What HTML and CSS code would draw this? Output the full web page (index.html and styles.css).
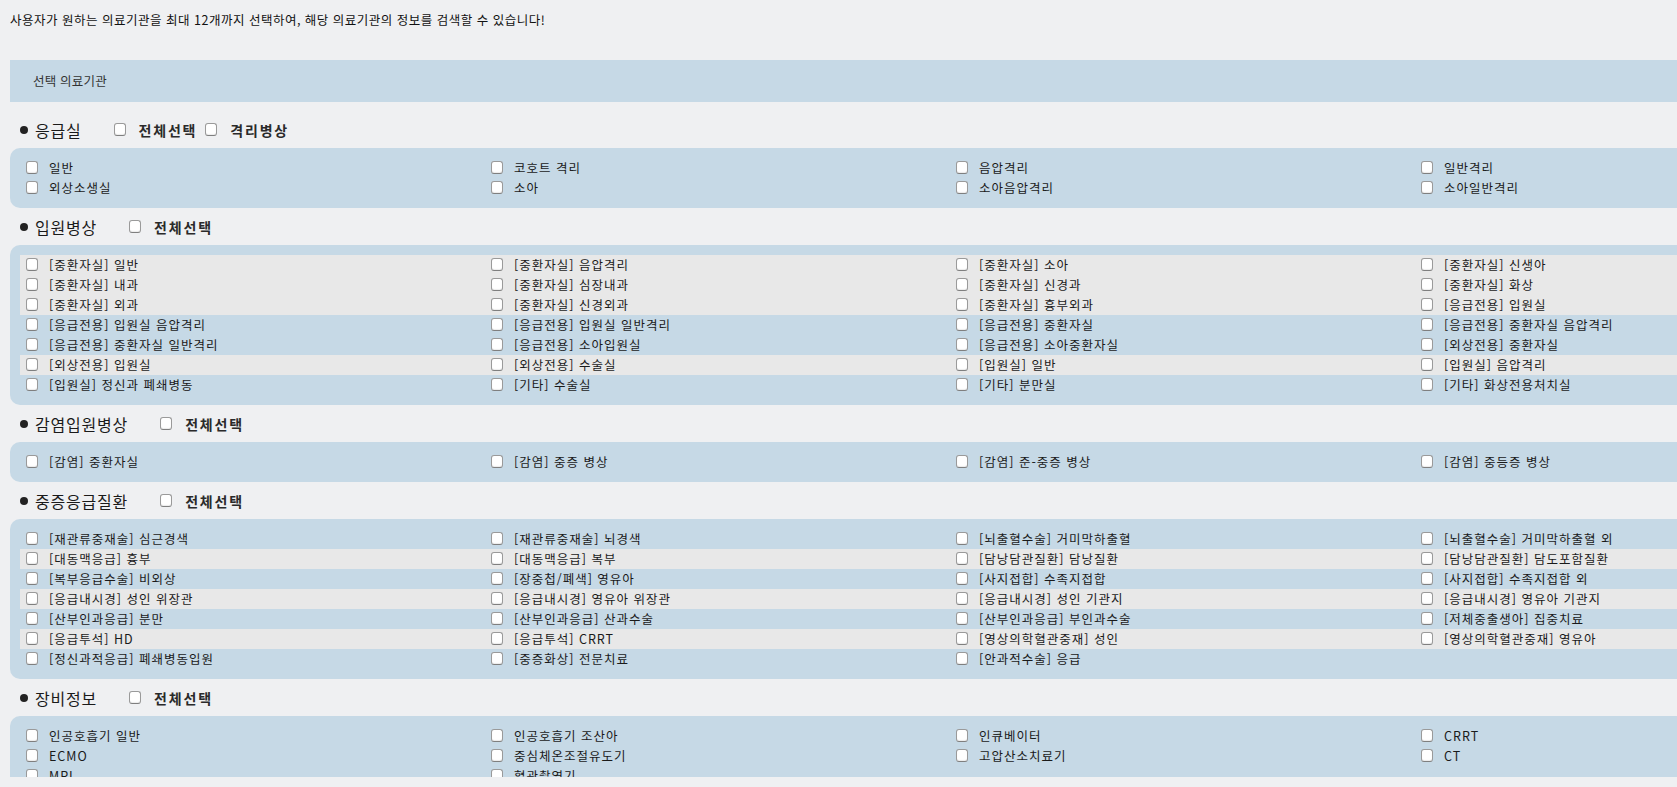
FILE: index.html
```html
<!DOCTYPE html>
<html lang="ko">
<head>
    <meta charset="UTF-8">
    <meta name="viewport" content="width=device-width, initial-scale=1.0">
    <title>의료기관 선택</title>
    <link rel="stylesheet" href="styles.css">
</head>
<body>

    <div class="page">

        <p class="intro">사용자가 원하는 의료기관을 최대 12개까지 선택하여, 해당 의료기관의 정보를 검색할 수 있습니다!</p>

        <!-- Selected list -->
        <div class="selected-bar">선택 의료기관</div>

        <!-- 응급실 -->
        <div class="section-title">
            <span class="dot"></span>
            <span class="title-name">응급실</span>
            <label class="all-check"><input type="checkbox">전체선택</label>
            <label class="all-check"><input type="checkbox">격리병상</label>
        </div>
        <div class="panel">
            <div class="row">
                <label class="item"><input type="checkbox">일반</label>
                <label class="item"><input type="checkbox">코호트 격리</label>
                <label class="item"><input type="checkbox">음압격리</label>
                <label class="item"><input type="checkbox">일반격리</label>
            </div>
            <div class="row">
                <label class="item"><input type="checkbox">외상소생실</label>
                <label class="item"><input type="checkbox">소아</label>
                <label class="item"><input type="checkbox">소아음압격리</label>
                <label class="item"><input type="checkbox">소아일반격리</label>
            </div>
        </div>

        <!-- 입원병상 -->
        <div class="section-title">
            <span class="dot"></span>
            <span class="title-name">입원병상</span>
            <label class="all-check"><input type="checkbox">전체선택</label>
        </div>
        <div class="panel">
            <div class="row alt">
                <label class="item"><input type="checkbox">[중환자실] 일반</label>
                <label class="item"><input type="checkbox">[중환자실] 음압격리</label>
                <label class="item"><input type="checkbox">[중환자실] 소아</label>
                <label class="item"><input type="checkbox">[중환자실] 신생아</label>
            </div>
            <div class="row alt">
                <label class="item"><input type="checkbox">[중환자실] 내과</label>
                <label class="item"><input type="checkbox">[중환자실] 심장내과</label>
                <label class="item"><input type="checkbox">[중환자실] 신경과</label>
                <label class="item"><input type="checkbox">[중환자실] 화상</label>
            </div>
            <div class="row alt">
                <label class="item"><input type="checkbox">[중환자실] 외과</label>
                <label class="item"><input type="checkbox">[중환자실] 신경외과</label>
                <label class="item"><input type="checkbox">[중환자실] 흉부외과</label>
                <label class="item"><input type="checkbox">[응급전용] 입원실</label>
            </div>
            <div class="row">
                <label class="item"><input type="checkbox">[응급전용] 입원실 음압격리</label>
                <label class="item"><input type="checkbox">[응급전용] 입원실 일반격리</label>
                <label class="item"><input type="checkbox">[응급전용] 중환자실</label>
                <label class="item"><input type="checkbox">[응급전용] 중환자실 음압격리</label>
            </div>
            <div class="row">
                <label class="item"><input type="checkbox">[응급전용] 중환자실 일반격리</label>
                <label class="item"><input type="checkbox">[응급전용] 소아입원실</label>
                <label class="item"><input type="checkbox">[응급전용] 소아중환자실</label>
                <label class="item"><input type="checkbox">[외상전용] 중환자실</label>
            </div>
            <div class="row alt">
                <label class="item"><input type="checkbox">[외상전용] 입원실</label>
                <label class="item"><input type="checkbox">[외상전용] 수술실</label>
                <label class="item"><input type="checkbox">[입원실] 일반</label>
                <label class="item"><input type="checkbox">[입원실] 음압격리</label>
            </div>
            <div class="row">
                <label class="item"><input type="checkbox">[입원실] 정신과 폐쇄병동</label>
                <label class="item"><input type="checkbox">[기타] 수술실</label>
                <label class="item"><input type="checkbox">[기타] 분만실</label>
                <label class="item"><input type="checkbox">[기타] 화상전용처치실</label>
            </div>
        </div>

        <!-- 감염입원병상 -->
        <div class="section-title">
            <span class="dot"></span>
            <span class="title-name">감염입원병상</span>
            <label class="all-check"><input type="checkbox">전체선택</label>
        </div>
        <div class="panel">
            <div class="row">
                <label class="item"><input type="checkbox">[감염] 중환자실</label>
                <label class="item"><input type="checkbox">[감염] 중증 병상</label>
                <label class="item"><input type="checkbox">[감염] 준-중증 병상</label>
                <label class="item"><input type="checkbox">[감염] 중등증 병상</label>
            </div>
        </div>

        <!-- 중증응급질환 -->
        <div class="section-title">
            <span class="dot"></span>
            <span class="title-name">중증응급질환</span>
            <label class="all-check"><input type="checkbox">전체선택</label>
        </div>
        <div class="panel">
            <div class="row">
                <label class="item"><input type="checkbox">[재관류중재술] 심근경색</label>
                <label class="item"><input type="checkbox">[재관류중재술] 뇌경색</label>
                <label class="item"><input type="checkbox">[뇌출혈수술] 거미막하출혈</label>
                <label class="item"><input type="checkbox">[뇌출혈수술] 거미막하출혈 외</label>
            </div>
            <div class="row alt">
                <label class="item"><input type="checkbox">[대동맥응급] 흉부</label>
                <label class="item"><input type="checkbox">[대동맥응급] 복부</label>
                <label class="item"><input type="checkbox">[담낭담관질환] 담낭질환</label>
                <label class="item"><input type="checkbox">[담낭담관질환] 담도포함질환</label>
            </div>
            <div class="row">
                <label class="item"><input type="checkbox">[복부응급수술] 비외상</label>
                <label class="item"><input type="checkbox">[장중첩/폐색] 영유아</label>
                <label class="item"><input type="checkbox">[사지접합] 수족지접합</label>
                <label class="item"><input type="checkbox">[사지접합] 수족지접합 외</label>
            </div>
            <div class="row alt">
                <label class="item"><input type="checkbox">[응급내시경] 성인 위장관</label>
                <label class="item"><input type="checkbox">[응급내시경] 영유아 위장관</label>
                <label class="item"><input type="checkbox">[응급내시경] 성인 기관지</label>
                <label class="item"><input type="checkbox">[응급내시경] 영유아 기관지</label>
            </div>
            <div class="row">
                <label class="item"><input type="checkbox">[산부인과응급] 분만</label>
                <label class="item"><input type="checkbox">[산부인과응급] 산과수술</label>
                <label class="item"><input type="checkbox">[산부인과응급] 부인과수술</label>
                <label class="item"><input type="checkbox">[저체중출생아] 집중치료</label>
            </div>
            <div class="row alt">
                <label class="item"><input type="checkbox">[응급투석] HD</label>
                <label class="item"><input type="checkbox">[응급투석] CRRT</label>
                <label class="item"><input type="checkbox">[영상의학혈관중재] 성인</label>
                <label class="item"><input type="checkbox">[영상의학혈관중재] 영유아</label>
            </div>
            <div class="row">
                <label class="item"><input type="checkbox">[정신과적응급] 폐쇄병동입원</label>
                <label class="item"><input type="checkbox">[중증화상] 전문치료</label>
                <label class="item"><input type="checkbox">[안과적수술] 응급</label>
            </div>
        </div>

        <!-- 장비정보 -->
        <div class="section-title">
            <span class="dot"></span>
            <span class="title-name">장비정보</span>
            <label class="all-check"><input type="checkbox">전체선택</label>
        </div>
        <div class="panel">
            <div class="row">
                <label class="item"><input type="checkbox">인공호흡기 일반</label>
                <label class="item"><input type="checkbox">인공호흡기 조산아</label>
                <label class="item"><input type="checkbox">인큐베이터</label>
                <label class="item"><input type="checkbox">CRRT</label>
            </div>
            <div class="row">
                <label class="item"><input type="checkbox">ECMO</label>
                <label class="item"><input type="checkbox">중심체온조절유도기</label>
                <label class="item"><input type="checkbox">고압산소치료기</label>
                <label class="item"><input type="checkbox">CT</label>
            </div>
            <div class="row">
                <label class="item"><input type="checkbox">MRI</label>
                <label class="item"><input type="checkbox">혈관촬영기</label>
            </div>
        </div>

    </div>

</body>
</html>
```

FILE: styles.css
```css
/* Reset */
* {
    box-sizing: border-box;
    margin: 0;
    padding: 0;
}

html, body {
    width: 100%;
    height: 100%;
    overflow: hidden; /* panels are wider than the window */
    background-color: #eff0f2;
    font-family: "Noto Sans CJK KR", "Noto Sans", sans-serif;
    color: #1a1a1a;
}

/* Scroll area (cut at the bottom like the original frame) */
.page {
    height: 777px;
    overflow: hidden;
    padding-left: 10px;
}

.intro {
    padding-top: 11px;
    height: 60px;
    font-size: 12.5px;
    line-height: 18px;
    letter-spacing: 0.5px;
    color: #111;
}

/* Selected list bar */
.selected-bar {
    width: 1900px;
    height: 42px;
    line-height: 42px;
    padding-left: 23px;
    background-color: #c6d9e6;
    font-size: 12.5px;
    letter-spacing: 0.2px;
    color: #333;
}

/* Section headers */
.section-title {
    display: flex;
    align-items: center;
    height: 37px;
    padding-left: 10px;
}

.selected-bar + .section-title {
    margin-top: 9px;
}

.dot {
    width: 8px;
    height: 8px;
    border-radius: 50%;
    background-color: #222;
    margin-right: 7px;
}

.title-name {
    font-size: 16px;
    letter-spacing: 0.8px;
    color: #1a1a1a;
    margin-right: 32px;
}

.all-check {
    display: flex;
    align-items: center;
    font-size: 14px;
    font-weight: bold;
    letter-spacing: 1.8px;
    color: #2a2a2a;
    margin-right: 8px;
}

.all-check input {
    margin-right: 13px;
}

/* Checkbox look */
input[type="checkbox"] {
    appearance: none;
    -webkit-appearance: none;
    flex: none;
    width: 12px;
    height: 13px;
    background-color: #fff;
    border: 1px solid #9a9a9a;
    border-bottom-color: #7f7f7f;
    border-radius: 3px;
    box-shadow: inset 0 -1px 1px rgba(0, 0, 0, 0.08);
}

/* Option panels */
.panel {
    width: 1900px;
    padding: 10px 0 10px 10px;
    background-color: #c6d9e6;
    border-radius: 10px;
}

.row {
    display: grid;
    grid-template-columns: repeat(4, 465px);
    height: 20px;
    padding-left: 6px;
}

.row.alt {
    background-color: #e8e8e8;
}

.item {
    display: flex;
    align-items: center;
    padding-bottom: 1px;
    font-size: 12.5px;
    letter-spacing: 1px;
    color: #1a1a1a;
    white-space: nowrap;
}

.item input {
    margin-right: 11px;
}
```
